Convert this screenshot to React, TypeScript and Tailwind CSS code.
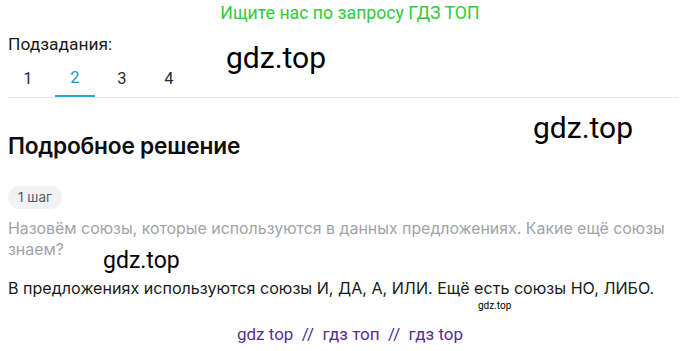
const tabs = ["1", "2", "3", "4"];

const App = () => {
  return (
    <div className="relative w-[700px] h-[351px] bg-white overflow-hidden font-['Roboto',sans-serif]">
      <div className="h-[27px] pt-[1px] text-center text-[17.7px] leading-[24px] text-[#2fcb3c]">
        Ищите нас по запросу ГДЗ ТОП
      </div>

      <div className="pl-2 w-[678px]">
        <div className="mt-[6px] text-[17.4px] leading-[23px] text-[#1c1c1c]">Подзадания:</div>

        <div className="mt-[5px] flex gap-[7px] border-b border-[#e6e8eb]">
          {tabs.map((t) => (
            <div
              key={t}
              className={
                t === "2"
                  ? "w-10 h-[36px] flex items-center justify-center text-[16.5px] text-[#2e8cc8] border-b-2 border-[#27a6d9] -mb-px"
                  : "w-10 h-[36px] flex items-center justify-center text-[16.5px] text-[#1f2a36]"
              }
            >
              {t}
            </div>
          ))}
        </div>

        <h2 className="mt-[34px] font-['Inter',sans-serif] font-semibold text-[22.7px] leading-[28px] tracking-[-0.2px] text-[#0d0d12]">
          Подробное решение
        </h2>

        <div className="mt-[26px] inline-flex items-center h-[23px] px-[10px] rounded-full bg-[#f1f2f4] text-[13.5px] text-[#555b63] font-['Inter',sans-serif]">
          1 шаг
        </div>

        <p className="mt-[9px] font-['Inter',sans-serif] text-[15.9px] leading-[21px] text-[#a0a3a8]">
          Назовём союзы, которые используются в данных предложениях. Какие ещё союзы знаем?
        </p>

        <p className="mt-[17px] font-['Inter',sans-serif] text-[16.1px] leading-[22px] text-[#1a1a1a]">
          В предложениях используются союзы И, ДА, А, ИЛИ. Ещё есть союзы НО, ЛИБО.
        </p>
      </div>

      <div className="mt-[23px] text-center text-[17px] leading-[24px] text-[#5a2d91]">
        gdz top&nbsp; //&nbsp; гдз топ&nbsp; //&nbsp; гдз top
      </div>

      <div className="absolute left-[226px] top-[44px] text-[30px] leading-[28px] text-black">gdz.top</div>
      <div className="absolute left-[533px] top-[114px] text-[30px] leading-[28px] text-black">gdz.top</div>
      <div className="absolute left-[103px] top-[250px] text-[23px] leading-[22px] text-black">gdz.top</div>
      <div className="absolute left-[478px] top-[301px] text-[10px] leading-[10px] text-black">gdz.top</div>
    </div>
  );
};

export default App;
